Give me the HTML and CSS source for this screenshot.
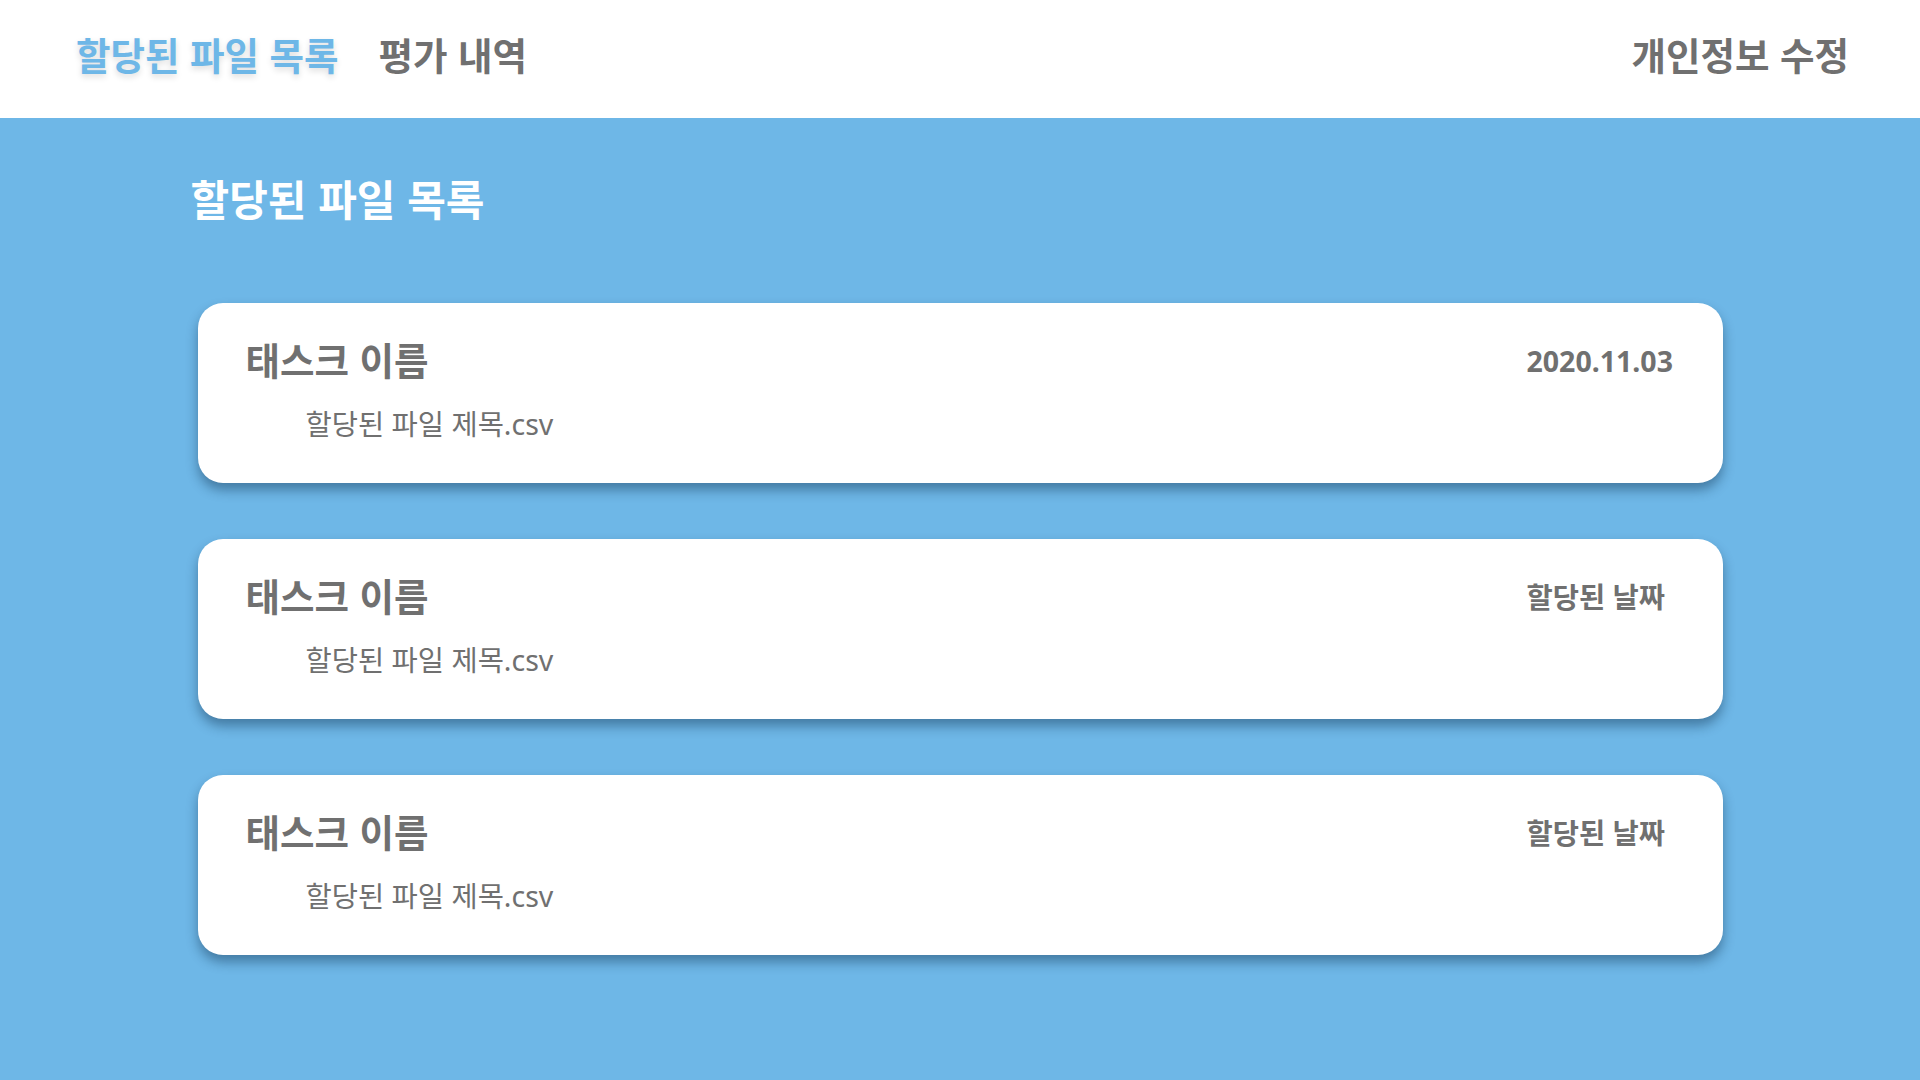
FILE: index.html
```html
<!DOCTYPE html>
<html lang="ko">
<head>
<meta charset="utf-8">
<title>할당된 파일 목록</title>
<link rel="stylesheet" href="styles.css">
</head>
<body>
<header class="topbar">
  <nav class="nav-left">
    <a class="nav-item active">할당된 파일 목록</a>
    <a class="nav-item">평가 내역</a>
  </nav>
  <a class="nav-item">개인정보 수정</a>
</header>
<main class="content">
  <h1 class="page-title">할당된 파일 목록</h1>
  <ul class="task-list">
    <li class="task-card">
      <div class="task-main">
        <div class="task-name">태스크 이름</div>
        <div class="task-file">할당된 파일 제목.csv</div>
      </div>
      <div class="task-date">2020.11.03</div>
    </li>
    <li class="task-card">
      <div class="task-main">
        <div class="task-name">태스크 이름</div>
        <div class="task-file">할당된 파일 제목.csv</div>
      </div>
      <div class="task-date">할당된 날짜</div>
    </li>
    <li class="task-card">
      <div class="task-main">
        <div class="task-name">태스크 이름</div>
        <div class="task-file">할당된 파일 제목.csv</div>
      </div>
      <div class="task-date">할당된 날짜</div>
    </li>
  </ul>
</main>
</body>
</html>
```
FILE: styles.css
```css
html, body {
  margin: 0;
  padding: 0;
}
body {
  width: 1920px;
  height: 1080px;
  overflow: hidden;
  background: #6eb7e7;
  font-family: "Noto Sans", "Noto Sans CJK KR", sans-serif;
  color: #707070;
}
.topbar {
  box-sizing: border-box;
  height: 118px;
  background: #ffffff;
  display: flex;
  align-items: center;
  justify-content: space-between;
  padding: 0 71px 10px 76px;
}
.nav-left {
  display: flex;
  align-items: center;
  gap: 40px;
}
.nav-item {
  font-family: "Noto Sans CJK KR", sans-serif;
  font-weight: 700;
  font-size: 37.5px;
  line-height: 1;
  color: #707070;
  text-decoration: none;
  white-space: nowrap;
}
.nav-item.active {
  color: #6eb7e7;
  text-shadow: 0 3px 6px rgba(0, 0, 0, 0.14);
}
.content {
  width: 1525px;
  margin: 0 auto;
  padding-top: 59px;
}
.page-title {
  margin: 0 0 84px -7px;
  font-family: "Noto Sans CJK KR", sans-serif;
  font-size: 42px;
  line-height: 1;
  font-weight: 700;
  color: #ffffff;
}
.task-list {
  list-style: none;
  margin: 0;
  padding: 0;
  display: flex;
  flex-direction: column;
  gap: 56px;
}
.task-card {
  box-sizing: border-box;
  height: 180px;
  background: #ffffff;
  border-radius: 25px;
  box-shadow: 0 7px 12px rgba(10, 40, 70, 0.42);
  display: flex;
  justify-content: space-between;
  padding: 37px 46px 0 48px;
}
.task-name {
  font-family: "Noto Sans CJK KR", sans-serif;
  font-size: 37.5px;
  line-height: 1;
  font-weight: 700;
  color: #707070;
}
.task-file {
  margin-top: 32px;
  padding-left: 60px;
  font-size: 28.5px;
  line-height: 1;
  font-weight: 400;
  color: #707070;
}
.task-date {
  width: 150px;
  padding-top: 7px;
  font-size: 28.5px;
  line-height: 1;
  font-weight: 700;
  color: #707070;
  white-space: nowrap;
}
```
